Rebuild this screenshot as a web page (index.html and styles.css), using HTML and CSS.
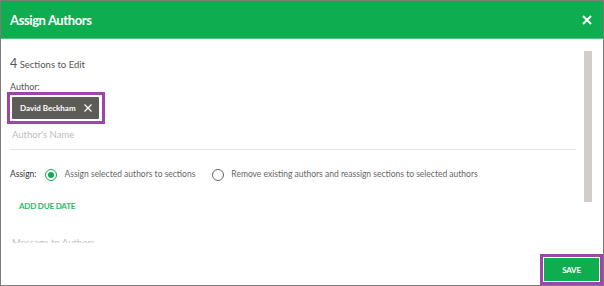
FILE: index.html
```html
<!DOCTYPE html>
<html>
<head>
<meta charset="utf-8">
<link rel="stylesheet" href="styles.css">
</head>
<body>
<div class="dialog">
  <div class="header">
    <span class="title">Assign Authors</span>
    <svg class="close" width="10" height="10" viewBox="0 0 10 10"><path d="M1 1L9 9M9 1L1 9" stroke="#fff" stroke-width="2"/></svg>
  </div>
  <div class="body">
    <div class="count"><span class="num">4</span> Sections to Edit</div>
    <div class="label">Author:</div>
    <div class="chip-wrap">
      <div class="chip">David Beckham
        <svg class="chip-x" width="8" height="8" viewBox="0 0 8 8"><path d="M0.5 0.5L7.5 7.5M7.5 0.5L0.5 7.5" stroke="#fff" stroke-width="1.2"/></svg>
      </div>
    </div>
    <div class="input">Author's Name</div>
    <div class="assign">
      <span class="assign-label">Assign:</span>
      <span class="radio on"></span>
      <span class="opt">Assign selected authors to sections</span>
      <span class="radio"></span>
      <span class="opt">Remove existing authors and reassign sections to selected authors</span>
    </div>
    <div class="due">ADD DUE DATE</div>
    <div class="message">Message to Authors</div>
    <div class="thumb"></div>
  </div>
  <div class="footer">
    <div class="save-wrap"><button class="save">SAVE</button></div>
  </div>
</div>
</body>
</html>
```
FILE: styles.css
```css
html, body {
  margin: 0;
  padding: 0;
}
body {
  font-family: "Lato", "Open Sans", sans-serif;
  color: #555;
}
.dialog {
  width: 604px;
  height: 286px;
  box-sizing: border-box;
  border: 1px solid #7c7c7c;
  display: flex;
  flex-direction: column;
  background: #fff;
}
.header {
  height: 37px;
  background: #0dad50;
  border-bottom: 1px solid #4cc47e;
  display: flex;
  align-items: center;
  justify-content: space-between;
  padding: 0 11px 0 9px;
  flex-shrink: 0;
}
.title {
  color: #fff;
  font-size: 13px;
  font-weight: 700;
  letter-spacing: -0.4px;
}
.close {
  display: block;
}
.body {
  position: relative;
  height: 204px;
  overflow: hidden;
  padding: 18px 0 0 9px;
  box-sizing: border-box;
  flex-shrink: 0;
}
.count {
  height: 13px;
  font-size: 9.5px;
  line-height: 13px;
  color: #555;
}
.count .num {
  font-size: 12.5px;
  line-height: 13px;
}
.label {
  margin-top: 12px;
  font-size: 9px;
  line-height: 10px;
  color: #555;
}
.chip-wrap {
  display: flex;
  width: max-content;
  margin: 0 0 0 -3px;
  border: 3px solid #9d45a9;
  padding: 2px 3px 2px 2px;
}
.chip {
  background: #5e5c57;
  color: #fff;
  font-size: 8px;
  font-weight: 700;
  height: 22px;
  padding: 0 7px 0 8px;
  display: flex;
  align-items: center;
  gap: 8px;
  border-radius: 1px;
}
.chip-x {
  display: block;
}
.input {
  margin-top: 4px;
  width: 566px;
  font-size: 9.5px;
  color: #bdbdbd;
  padding: 0 0 8px 2px;
  border-bottom: 1px solid #e6e6e6;
  box-sizing: border-box;
  line-height: 13px;
}
.assign {
  margin-top: 18px;
  height: 13px;
  display: flex;
  align-items: center;
  font-size: 8.5px;
  line-height: 13px;
}
.assign-label {
  color: #333;
  margin-right: 9px;
}
.radio {
  width: 10px;
  height: 10px;
  border: 1px solid #666;
  border-radius: 50%;
  box-sizing: content-box;
  position: relative;
  margin-right: 7px;
}
.radio.on {
  border: 1px solid #0dad50;
}
.radio.on::after {
  content: "";
  position: absolute;
  left: 2px;
  top: 2px;
  width: 6px;
  height: 6px;
  border-radius: 50%;
  background: #0dad50;
}
.opt {
  color: #666;
  margin-right: 17px;
}
.due {
  margin: 19px 0 0 9px;
  font-size: 8px;
  font-weight: 700;
  letter-spacing: -0.2px;
  color: #1cbd5f;
  line-height: 13px;
}
.message {
  margin-top: 23px;
  font-size: 9.5px;
  color: #c4c4c4;
  line-height: 13px;
  padding-left: 2px;
}
.thumb {
  position: absolute;
  left: 583px;
  top: 12px;
  width: 8px;
  height: 151px;
  background: #d1cdc8;
}
.footer {
  flex: 1;
  display: flex;
  justify-content: flex-end;
  align-items: flex-end;
}
.save-wrap {
  border: 3px solid #9d45a9;
  padding: 1px;
  background: #fff;
}
.save {
  display: block;
  width: 55px;
  height: 23px;
  border: 0;
  background: #0dad50;
  color: #fff;
  font-family: "Lato", sans-serif;
  font-size: 8px;
  font-weight: 700;
  letter-spacing: -0.2px;
  padding: 0;
  margin: 0;
}
```
